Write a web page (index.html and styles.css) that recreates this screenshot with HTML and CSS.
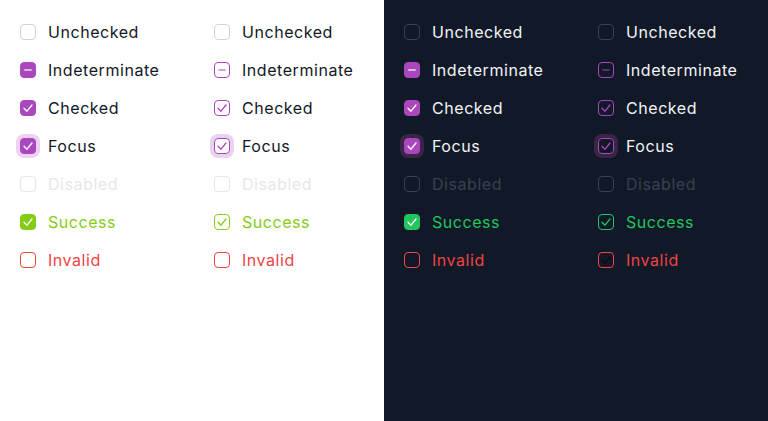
FILE: index.html
```html
<!DOCTYPE html>
<html>
<head>
<meta charset="utf-8">
<link rel="stylesheet" href="styles.css">
</head>
<body>
<div class="page">
  <section class="half light">
    <div class="col filled">
      <div class="row"><span class="box unchecked"></span><span class="label">Unchecked</span></div>
      <div class="row"><span class="box primary"><svg viewBox="0 0 16 16"><path class="dash" d="M5 8H11"/></svg></span><span class="label">Indeterminate</span></div>
      <div class="row"><span class="box primary"><svg viewBox="0 0 16 16"><path class="check" d="M4 8.2L7 11.2L12 5"/></svg></span><span class="label">Checked</span></div>
      <div class="row"><span class="box primary focus"><svg viewBox="0 0 16 16"><path class="check" d="M4 8.2L7 11.2L12 5"/></svg></span><span class="label">Focus</span></div>
      <div class="row disabled"><span class="box unchecked"></span><span class="label">Disabled</span></div>
      <div class="row success"><span class="box tone"><svg viewBox="0 0 16 16"><path class="check" d="M4 8.2L7 11.2L12 5"/></svg></span><span class="label">Success</span></div>
      <div class="row invalid"><span class="box toneline"></span><span class="label">Invalid</span></div>
    </div>
    <div class="col outline">
      <div class="row"><span class="box unchecked"></span><span class="label">Unchecked</span></div>
      <div class="row"><span class="box primary"><svg viewBox="0 0 16 16"><path class="dash" d="M5 8H11"/></svg></span><span class="label">Indeterminate</span></div>
      <div class="row"><span class="box primary"><svg viewBox="0 0 16 16"><path class="check" d="M4 8.2L7 11.2L12 5"/></svg></span><span class="label">Checked</span></div>
      <div class="row"><span class="box primary focus"><svg viewBox="0 0 16 16"><path class="check" d="M4 8.2L7 11.2L12 5"/></svg></span><span class="label">Focus</span></div>
      <div class="row disabled"><span class="box unchecked"></span><span class="label">Disabled</span></div>
      <div class="row success"><span class="box tone"><svg viewBox="0 0 16 16"><path class="check" d="M4 8.2L7 11.2L12 5"/></svg></span><span class="label">Success</span></div>
      <div class="row invalid"><span class="box toneline"></span><span class="label">Invalid</span></div>
    </div>
  </section>
  <section class="half dark">
    <div class="col filled">
      <div class="row"><span class="box unchecked"></span><span class="label">Unchecked</span></div>
      <div class="row"><span class="box primary"><svg viewBox="0 0 16 16"><path class="dash" d="M5 8H11"/></svg></span><span class="label">Indeterminate</span></div>
      <div class="row"><span class="box primary"><svg viewBox="0 0 16 16"><path class="check" d="M4 8.2L7 11.2L12 5"/></svg></span><span class="label">Checked</span></div>
      <div class="row"><span class="box primary focus"><svg viewBox="0 0 16 16"><path class="check" d="M4 8.2L7 11.2L12 5"/></svg></span><span class="label">Focus</span></div>
      <div class="row disabled"><span class="box unchecked"></span><span class="label">Disabled</span></div>
      <div class="row success"><span class="box tone"><svg viewBox="0 0 16 16"><path class="check" d="M4 8.2L7 11.2L12 5"/></svg></span><span class="label">Success</span></div>
      <div class="row invalid"><span class="box toneline"></span><span class="label">Invalid</span></div>
    </div>
    <div class="col outline">
      <div class="row"><span class="box unchecked"></span><span class="label">Unchecked</span></div>
      <div class="row"><span class="box primary"><svg viewBox="0 0 16 16"><path class="dash" d="M5 8H11"/></svg></span><span class="label">Indeterminate</span></div>
      <div class="row"><span class="box primary"><svg viewBox="0 0 16 16"><path class="check" d="M4 8.2L7 11.2L12 5"/></svg></span><span class="label">Checked</span></div>
      <div class="row"><span class="box primary focus"><svg viewBox="0 0 16 16"><path class="check" d="M4 8.2L7 11.2L12 5"/></svg></span><span class="label">Focus</span></div>
      <div class="row disabled"><span class="box unchecked"></span><span class="label">Disabled</span></div>
      <div class="row success"><span class="box tone"><svg viewBox="0 0 16 16"><path class="check" d="M4 8.2L7 11.2L12 5"/></svg></span><span class="label">Success</span></div>
      <div class="row invalid"><span class="box toneline"><svg viewBox="0 0 16 16"><path class="check ghost" d="M4 8.2L7 11.2L12 5"/></svg></span><span class="label">Invalid</span></div>
    </div>
  </section>
</div>
</body>
</html>
```
FILE: styles.css
```css
html, body {
  margin: 0;
  padding: 0;
}
body {
  font-family: Inter, "Noto Sans", sans-serif;
  font-size: 16px;
}
.page {
  display: flex;
  width: 768px;
  height: 421px;
}
.half {
  width: 384px;
  flex: none;
  box-sizing: border-box;
  padding: 20px 0 0 20px;
  display: flex;
  --primary: #ab47bc;
  --success: #84cc16;
  --invalid: #ef4444;
}
.light {
  background: #ffffff;
  color: #111827;
  --border: #d1d5db;
  --dis-border: #e5e7eb;
  --dis-text: #e5e7eb;
  --ring: #ecd2f1;
}
.dark {
  background: #111827;
  color: #f3f4f6;
  --border: #374151;
  --dis-border: #374151;
  --dis-text: #374151;
  --ring: #3a2447;
  --success: #22c55e;
}
.col {
  width: 194px;
  flex: none;
  display: flex;
  flex-direction: column;
  gap: 14px;
}
.row {
  display: flex;
  align-items: center;
  gap: 12px;
  height: 24px;
  line-height: 24px;
}
.label {
  letter-spacing: 0.55px;
}
.box {
  width: 16px;
  height: 16px;
  box-sizing: border-box;
  border-radius: 4px;
  border: 1px solid var(--border);
  flex: none;
  display: flex;
}
.box svg {
  width: 16px;
  height: 16px;
  margin: -1px;
  display: block;
  flex: none;
}
.box path {
  fill: none;
  stroke-linecap: round;
  stroke-linejoin: round;
}
.check { stroke-width: 1.3; }
.dash { stroke-width: 2; }
.filled .primary {
  background: var(--primary);
  border-color: var(--primary);
}
.filled .primary .check { stroke: #ffffff; }
.filled .primary .dash { stroke: #ffffff; opacity: 0.6; }
.outline .primary {
  border-color: var(--primary);
}
.outline .primary .check { stroke: var(--primary); }
.outline .primary .dash { stroke: var(--primary); opacity: 0.5; }
.focus {
  box-shadow: 0 0 0 4px var(--ring);
}
.disabled .box { border-color: var(--dis-border); }
.disabled .label { color: var(--dis-text); }
.success .label { color: var(--success); }
.filled .success .tone {
  background: var(--success);
  border-color: var(--success);
}
.filled .tone .check { stroke: #ffffff; }
.outline .tone { border-color: var(--success); }
.outline .tone .check { stroke: var(--success); }
.invalid .label { color: var(--invalid); }
.toneline { border-color: var(--invalid); }
.ghost { stroke: #000000; opacity: 0.7; }
```
